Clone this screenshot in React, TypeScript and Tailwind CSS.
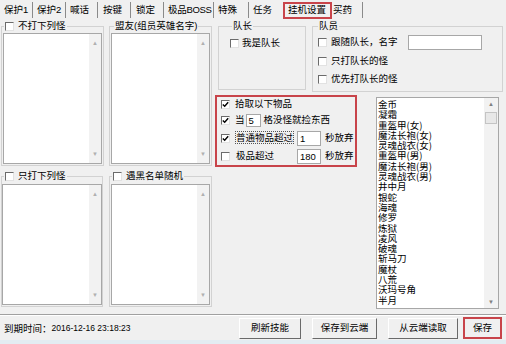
import React from 'react';

const items = [
  '金币', '凝霜', '重盔甲(女)', '魔法长袍(女)', '灵魂战衣(女)', '重盔甲(男)', '魔法长袍(男)',
  '灵魂战衣(男)', '井中月', '银蛇', '海魂', '修罗', '炼狱', '凌风', '破魂', '斩马刀', '魔杖',
  '八荒', '沃玛号角', '半月',
];

const Check: React.FC<{ checked?: boolean }> = ({ checked }) => (
  <span className="w-[9px] h-[9px] shrink-0 bg-white border border-t-[#6b6b6b] border-l-[#6b6b6b] border-r-[#e2e2e2] border-b-[#e2e2e2] flex items-center justify-center">
    {checked && (
      <svg width="7" height="7" viewBox="0 0 7 7">
        <path d="M0.8 3.4 L2.7 5.3 L6.2 1.2" stroke="#000" strokeWidth="1.4" fill="none" />
      </svg>
    )}
  </span>
);

const Sep = () => <span className="w-px h-[16px] bg-[#8a8a8a] shrink-0" />;

const ListBox: React.FC<{ className?: string }> = ({ className }) => (
  <div className={`flex bg-white border border-[#a7a7a7] ${className ?? ''}`}>
    <div className="flex-1" />
    <div className="w-[12px] bg-[#f2f2f2] flex flex-col items-center justify-between py-[6px]">
      <span className="text-[#b0b0b0] text-[6px] leading-[6px]">▲</span>
      <span className="text-[#b0b0b0] text-[6px] leading-[6px]">▼</span>
    </div>
  </div>
);

const App: React.FC = () => {
  return (
    <div className="w-[506px] h-[344px] bg-[#f0f0f0] text-black text-[9.5px] whitespace-nowrap font-['Liberation_Sans','Noto_Sans_CJK_SC',sans-serif] flex flex-col overflow-hidden">
      {/* tabs */}
      <div className="h-[20px] flex items-center pl-[4px]">
        <span className="w-[28px]">保护1</span>
        <Sep />
        <span className="ml-[4px] w-[28px]">保护2</span>
        <Sep />
        <span className="ml-[4px] w-[27px]">喊话</span>
        <Sep />
        <span className="ml-[5px] w-[27px]">按键</span>
        <Sep />
        <span className="ml-[5px] w-[27px]">锁定</span>
        <Sep />
        <span className="ml-[4px] w-[45px] tracking-[-0.3px]">极品BOSS</span>
        <Sep />
        <span className="ml-[4px] w-[30px]">特殊</span>
        <Sep />
        <span className="ml-[4px] w-[30px]">任务</span>
        <span className="w-[49px] h-[17px] border-2 border-[#c8444a] pl-[3px] flex items-center">挂机设置</span>
        <span className="ml-[1px] w-[29px]">买药</span>
        <Sep />
      </div>

      {/* body */}
      <div className="h-[294px] flex">
        {/* left lists */}
        <div className="w-[214px] flex flex-col">
          <div className="flex h-[146px]">
            <fieldset className="ml-[1px] w-[103px] h-[146px] border border-[#d2d2d2] px-[1px] pt-[1px] pb-[1px] flex flex-col">
              <legend className="ml-[1px] px-[1px] h-[12px] flex items-center gap-[4px]">
                <Check />
                <span>不打下列怪</span>
              </legend>
              <ListBox className="flex-1" />
            </fieldset>
            <fieldset className="ml-[5px] w-[103px] h-[146px] border border-[#d2d2d2] px-[1px] pt-[1px] pb-[1px] flex flex-col">
              <legend className="ml-[3px] px-[1px] h-[12px] flex items-center">盟友(组员英雄名字)</legend>
              <ListBox className="flex-1" />
            </fieldset>
          </div>
          <div className="flex h-[137px] mt-[4px]">
            <fieldset className="ml-[1px] w-[102px] h-[137px] border border-[#d2d2d2] px-0 pt-[2px] pb-[1px] flex flex-col">
              <legend className="ml-[2px] px-[1px] h-[12px] flex items-center gap-[4px]">
                <Check />
                <span>只打下列怪</span>
              </legend>
              <ListBox className="flex-1" />
            </fieldset>
            <fieldset className="ml-[6px] w-[103px] h-[137px] border border-[#d2d2d2] px-[1px] pt-[2px] pb-[1px] flex flex-col">
              <legend className="ml-[1px] px-[1px] h-[12px] flex items-center gap-[4px]">
                <Check />
                <span>遇黑名单随机</span>
              </legend>
              <ListBox className="flex-1" />
            </fieldset>
          </div>
        </div>

        {/* right side */}
        <div className="flex-1 flex flex-col">
          <div className="flex h-[72px]">
            <fieldset className="ml-[4px] w-[88px] h-[70px] border border-[#d2d2d2] pl-[11px]">
              <legend className="ml-[2px] px-[1px] h-[12px] flex items-center">队长</legend>
              <div className="mt-[5px] h-[12px] flex items-center gap-[3px]">
                <Check />
                <span>我是队长</span>
              </div>
            </fieldset>
            <fieldset className="ml-[6px] w-[191px] h-[72px] border border-[#d2d2d2] pl-[5px]">
              <legend className="ml-[0px] px-[1px] h-[12px] flex items-center">队员</legend>
              <div className="mt-[3px] h-[15px] flex items-center gap-[4px]">
                <Check />
                <span>跟随队长，名字</span>
                <span className="ml-[6px] w-[74px] h-[15px] bg-white border border-[#a7a7a7]" />
              </div>
              <div className="mt-[4px] h-[14px] flex items-center gap-[4px]">
                <Check />
                <span>只打队长的怪</span>
              </div>
              <div className="mt-[4px] h-[14px] flex items-center gap-[4px]">
                <Check />
                <span>优先打队长的怪</span>
              </div>
            </fieldset>
          </div>

          <div className="flex mt-[3px]">
            <div className="ml-[1px] w-[142px] h-[72px] border-2 border-[#c8444a] pl-[4px] flex flex-col">
              <div className="h-[14px] flex items-center gap-[5px]">
                <Check checked />
                <span>拾取以下物品</span>
              </div>
              <div className="h-[18px] flex items-center">
                <Check checked />
                <span className="ml-[5px]">当</span>
                <span className="ml-[1px] w-[15px] h-[13px] bg-white border border-[#a7a7a7] pl-[2px] leading-[11px]">5</span>
                <span className="ml-[3px]">格没怪就捡东西</span>
              </div>
              <div className="h-[18px] flex items-center">
                <Check checked />
                <span className="ml-[5px] w-[62px]">
                  <span className="border border-dotted border-[#555] leading-[11px] inline-block">普通物品超过</span>
                </span>
                <span className="w-[24px] h-[15px] bg-white border border-[#a7a7a7] pl-[2px] leading-[13px]">1</span>
                <span className="ml-[4px]">秒放弃</span>
              </div>
              <div className="h-[18px] flex items-center">
                <Check />
                <span className="ml-[5px] w-[62px] pl-[1px]">极品超过</span>
                <span className="w-[24px] h-[15px] bg-white border border-[#a7a7a7] pl-[2px] leading-[13px]">180</span>
                <span className="ml-[4px]">秒放弃</span>
              </div>
            </div>

            <div className="ml-[19px] mt-[2px] w-[123px] h-[212px] bg-white border border-[#a7a7a7] flex">
              <div className="flex-1 pl-[1px] pt-[1px] flex flex-col text-[9.5px] font-['Noto_Sans_CJK_SC',sans-serif]">
                {items.map((t) => (
                  <span key={t} className="leading-[10.3px] h-[10.3px]">{t}</span>
                ))}
              </div>
              <div className="w-[14px] bg-[#f2f2f2] flex flex-col items-center py-[3px]">
                <span className="text-[#808080] text-[6px] leading-[6px]">▲</span>
                <span className="mt-[5px] w-[12px] h-[12px] bg-[#e8e8e8] border border-[#c4c4c4]" />
                <span className="flex-1" />
                <span className="text-[#808080] text-[6px] leading-[6px]">▼</span>
              </div>
            </div>
          </div>
        </div>
      </div>

      {/* separator */}
      <div className="h-[2px] border-t border-[#a0a0a0] border-b border-b-white" />

      {/* bottom bar */}
      <div className="h-[24px] flex items-center">
        <span className="ml-[4px] font-['Noto_Sans_CJK_SC',sans-serif]">到期时间：</span>
        <span className="text-[8.5px]">2016-12-16 23:18:23</span>
        <div className="ml-auto flex items-center">
          <button className="w-[62px] h-[21px] bg-[#f0f0f0] border border-t-white border-l-white border-r-[#6a6a6a] border-b-[#6a6a6a]">刷新技能</button>
          <button className="ml-[11px] w-[65px] h-[21px] bg-[#f0f0f0] border border-t-white border-l-white border-r-[#6a6a6a] border-b-[#6a6a6a]">保存到云端</button>
          <button className="ml-[11px] w-[70px] h-[21px] bg-[#f0f0f0] border border-t-white border-l-white border-r-[#6a6a6a] border-b-[#6a6a6a]">从云端读取</button>
          <button className="ml-[5px] mr-[4px] w-[39px] h-[22px] bg-[#f0f0f0] border-2 border-[#c8444a]">保存</button>
        </div>
      </div>
      <div className="flex-1 bg-[#e3ecf2]" />
    </div>
  );
};

export default App;
